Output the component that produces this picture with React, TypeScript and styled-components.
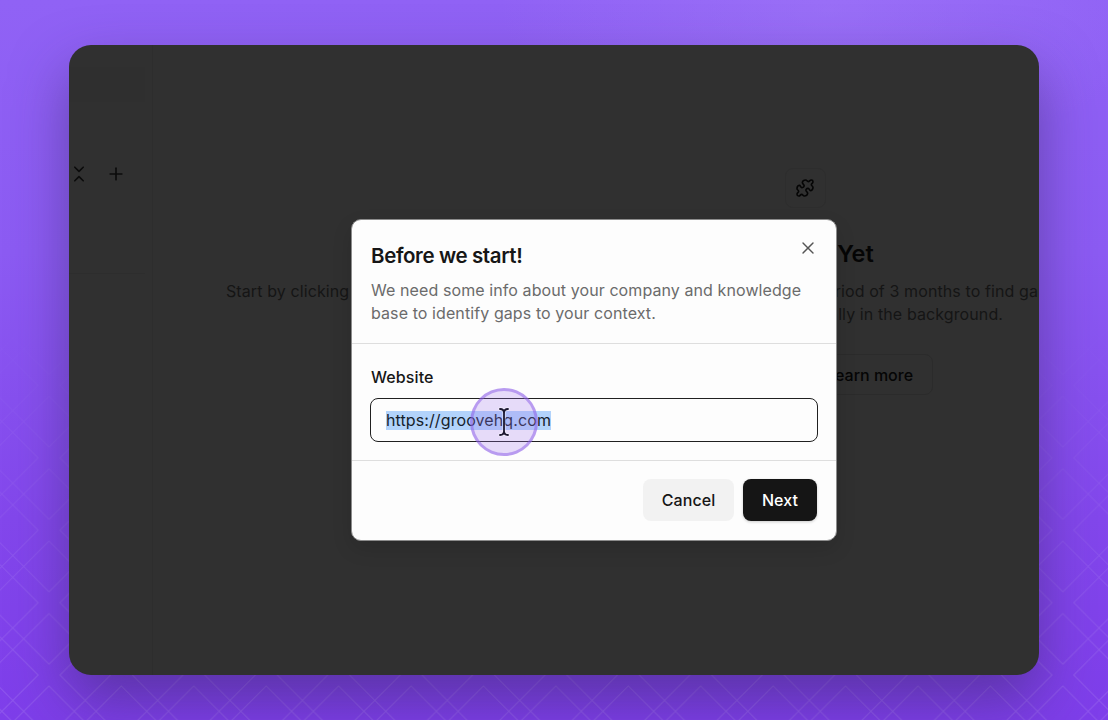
import React, { useState } from "react";
import styled, { createGlobalStyle } from "styled-components";
import { Plus, X } from "lucide-react";

const TILE = 72.42;
const DIAMOND = 61.5;

const App: React.FC = () => {
  const [website] = useState<string>("https://groovehq.com");

  return (
    <Stage>
      <GlobalStyle />
      <Backdrop />
      <Window>
        <Sidebar>
          <SidebarTop />
          <SidebarTools>
            <CollapseIcon />
            <Plus size={20} strokeWidth={2} />
          </SidebarTools>
          <SidebarRest />
        </Sidebar>
        <Content>
          <IconTile>
            <PuzzleIcon />
          </IconTile>
          <EmptyTitle>No Gaps Yet</EmptyTitle>
          <EmptyText>
            <EmptyLine>
              <span>Start by clicking</span>
              <span>period of 3 months to find ga</span>
            </EmptyLine>
            <EmptyLineEnd>ally in the background.</EmptyLineEnd>
          </EmptyText>
          <LearnMore>Learn more</LearnMore>
        </Content>
        <Dialog role="dialog">
          <DialogHeader>
            <TitleRow>
              <DialogTitle>Before we start!</DialogTitle>
              <CloseButton aria-label="Close">
                <X size={20} strokeWidth={1.7} />
              </CloseButton>
            </TitleRow>
            <Description>
              We need some info about your company and knowledge
              <br />
              base to identify gaps to your context.
            </Description>
          </DialogHeader>
          <DialogBody>
            <Label>Website</Label>
            <Field>
              <Selected>{website}</Selected>
              <Pointer>
                <TextCursor />
              </Pointer>
            </Field>
          </DialogBody>
          <DialogFooter>
            <Button>Cancel</Button>
            <Button variant="primary">Next</Button>
          </DialogFooter>
        </Dialog>
      </Window>
    </Stage>
  );
};

// Overlapping diamonds that fade in towards the bottom
const Backdrop: React.FC = () => {
  const c = 49;
  const offsets = [-1, 0, 1];
  return (
    <BackdropSvg width="1108" height="720">
      <defs>
        <pattern
          id="diamonds"
          x={0}
          y={23.3}
          width={TILE}
          height={TILE}
          patternUnits="userSpaceOnUse"
        >
          {offsets.map((i) =>
            [-1, 0, 1, 2].map((j) => {
              const x = c + i * TILE;
              const y = j * TILE;
              return (
                <path
                  key={`${i}${j}`}
                  d={`M${x} ${y - DIAMOND}L${x + DIAMOND} ${y}L${x} ${y + DIAMOND}L${x - DIAMOND} ${y}Z`}
                  fill="none"
                  stroke="#fff"
                />
              );
            })
          )}
        </pattern>
        <linearGradient id="fade" x1="0" y1="0" x2="0" y2="1">
          <stop offset="0.42" stopColor="#fff" stopOpacity="0" />
          <stop offset="1" stopColor="#fff" stopOpacity="0.15" />
        </linearGradient>
        <mask id="fadeMask">
          <rect width="1108" height="720" fill="url(#fade)" />
        </mask>
      </defs>
      <rect width="1108" height="720" fill="url(#diamonds)" mask="url(#fadeMask)" />
    </BackdropSvg>
  );
};

const CollapseIcon: React.FC = () => (
  <svg width="12" height="16" viewBox="0 0 12 16" fill="none" stroke="currentColor" strokeWidth="1.6" strokeLinecap="round" strokeLinejoin="round">
    <path d="M1.8 1.2 6 5.4l4.2-4.2M1.8 14.8 6 10.6l4.2 4.2" />
  </svg>
);

const PuzzleIcon: React.FC = () => (
  <svg width="18" height="18" viewBox="0 0 54 54" fill="none" stroke="currentColor" strokeWidth="4.8" strokeLinecap="round" strokeLinejoin="round">
    <path d="M19 10C20 5 25 3 29 3C33 3 33 8 37 8C41 8 41 3 46 3C50 3 51 5 51 8C51 13 46 13 46 17C46 21 51 21 51 25C51 30 49 34 44 35C40 35 41 29 36 28C31 28 29 32 30 35C31 39 35 39 35 43C34 48 29 51 25 51C21 51 21 46 17 46C13 46 13 51 8 51C5 51 3 49 3 46C3 41 8 41 8 37C8 33 3 33 3 29C3 24 5 20 10 19C14 19 13 25 18 26C23 26 25 22 24 19C23 15 19 15 19 10Z" />
  </svg>
);

const TextCursor: React.FC = () => (
  <svg width="14" height="32" viewBox="0 0 14 32" fill="none" strokeLinecap="round">
    <path d="M3 3Q7 3 7 7Q7 3 11 3M7 6.5V25.5M3 29Q7 29 7 25Q7 29 11 29" stroke="#fff" strokeOpacity="0.5" strokeWidth="3.4" />
    <path d="M3 3Q7 3 7 7Q7 3 11 3M7 6.5V25.5M3 29Q7 29 7 25Q7 29 11 29" stroke="#1c1830" strokeWidth="1.8" />
  </svg>
);

const GlobalStyle = createGlobalStyle`
  body {
    margin: 0;
    overflow: hidden;
    font-family: Inter, "Liberation Sans", sans-serif;
  }

  * {
    box-sizing: border-box;
  }
`;

const Stage = styled.div`
  position: relative;
  width: 1108px;
  height: 720px;
  padding: 45px 69px;
  overflow: hidden;
  background:
    radial-gradient(ellipse 330px 150px at 830px 10px, rgba(168, 130, 250, 0.4), transparent),
    linear-gradient(180deg, #9062f5 0%, #8c5bf3 35%, #8347ec 72%, #7e3eea 100%);
`;

const BackdropSvg = styled.svg`
  position: absolute;
  inset: 0;
`;

const Window = styled.main`
  position: relative;
  display: flex;
  width: 970px;
  height: 630px;
  border-radius: 22px;
  overflow: hidden;
  background: #303030;
  box-shadow: 0 26px 56px rgba(56, 40, 100, 0.5);
`;

const Sidebar = styled.aside`
  display: flex;
  flex-direction: column;
  flex: none;
  width: 84px;
  border-right: 1px solid #2d2d2d;
`;

const SidebarTop = styled.div`
  width: 76px;
  height: 35px;
  margin-top: 22px;
  background: #2f2f2f;
`;

const SidebarTools = styled.div`
  display: flex;
  align-items: center;
  justify-content: space-between;
  height: 20px;
  margin-top: 62px;
  padding: 0 26px 0 4px;
  color: #0b0b0b;
`;

const SidebarRest = styled.div`
  width: 76px;
  margin-top: 89px;
  border-top: 1px solid #2d2d2d;
`;

const Content = styled.section`
  display: flex;
  flex-direction: column;
  flex: none;
  align-items: center;
  width: 1304px;
  padding-top: 123px;
`;

const IconTile = styled.div`
  display: flex;
  align-items: center;
  justify-content: center;
  width: 41px;
  height: 40px;
  border: 1px solid #2d2d2d;
  border-radius: 8px;
  color: #050505;
`;

const EmptyTitle = styled.h2`
  margin: 30px 1px 0 0;
  font-size: 23.5px;
  font-weight: 600;
  line-height: 32px;
  letter-spacing: -0.1px;
  color: #050505;
`;

const EmptyText = styled.div`
  width: 1158px;
  margin-top: 10px;
  font-size: 16px;
  line-height: 23px;
  letter-spacing: 0.1px;
  color: #151515;
`;

const EmptyLine = styled.div`
  display: flex;
  justify-content: space-between;
  width: 812px;
  white-space: nowrap;
`;

const EmptyLineEnd = styled.div`
  width: 777px;
  text-align: right;
`;

const LearnMore = styled.button`
  width: 126px;
  height: 41px;
  margin: 28px 0 0 129px;
  border: 1px solid #2b2b2b;
  border-radius: 8px;
  background: transparent;
  font: 500 16px Inter, sans-serif;
  color: #050505;
`;

const Dialog = styled.div`
  position: absolute;
  top: 174px;
  left: 282px;
  width: 486px;
  height: 322px;
  border: 1px solid #8c8c8c;
  border-radius: 10px;
  background: #fdfdfd;
  box-shadow: 0 8px 20px rgba(0, 0, 0, 0.12);
`;

const DialogHeader = styled.header`
  height: 124px;
  padding: 21px 19px 0;
  border-bottom: 1px solid #dedede;
`;

const TitleRow = styled.div`
  display: flex;
  justify-content: space-between;
  height: 30px;
`;

const DialogTitle = styled.h1`
  margin: 0;
  font-size: 20.5px;
  font-weight: 600;
  line-height: 30px;
  letter-spacing: -0.38px;
  color: #161616;
`;

const CloseButton = styled.button`
  display: flex;
  align-items: center;
  justify-content: center;
  width: 20px;
  height: 20px;
  margin: -3px -1px 0 0;
  padding: 0;
  border: none;
  background: none;
  color: #555;
`;

const Description = styled.p`
  margin: 8px 0 0;
  font-size: 16px;
  line-height: 23px;
  letter-spacing: 0.09px;
  white-space: nowrap;
  color: #6b6b6b;
`;

const DialogBody = styled.div`
  height: 117px;
  padding: 22px 18px 0;
  border-bottom: 1px solid #dedede;
`;

const Label = styled.label`
  display: block;
  padding-left: 1px;
  font-size: 16px;
  font-weight: 500;
  line-height: 23px;
  letter-spacing: 0.1px;
  color: #161616;
`;

const Field = styled.div`
  position: relative;
  display: flex;
  align-items: center;
  width: 448px;
  height: 44px;
  margin-top: 9px;
  padding-left: 15px;
  border: 1.5px solid #202020;
  border-radius: 8px;
`;

const Selected = styled.span`
  font-size: 16px;
  line-height: 19px;
  letter-spacing: 0.1px;
  background: #b2d3fb;
  color: #161e2c;
`;

const Pointer = styled.div`
  position: absolute;
  top: -11px;
  left: 99px;
  display: flex;
  align-items: center;
  justify-content: center;
  width: 68px;
  height: 68px;
  padding-right: 1px;
  border: 3px solid rgba(139, 92, 232, 0.5);
  border-radius: 50%;
  background: rgba(165, 120, 240, 0.25);
`;

const DialogFooter = styled.footer`
  display: flex;
  justify-content: flex-end;
  gap: 9px;
  padding: 18px 19px;
`;

const Button = styled.button<{ variant?: "primary" }>`
  width: ${({ variant }) => (variant === "primary" ? "74px" : "91px")};
  height: 42px;
  padding: 0;
  border: none;
  border-radius: 8px;
  font: 500 16px Inter, sans-serif;
  letter-spacing: 0.1px;
  ${({ variant }) =>
    variant === "primary"
      ? `
    background: #151515;
    color: #fff;
    box-shadow: 0 1px 3px rgba(0, 0, 0, 0.2);
  `
      : `
    background: #f2f2f2;
    color: #161616;
  `}
`;

export default App;
